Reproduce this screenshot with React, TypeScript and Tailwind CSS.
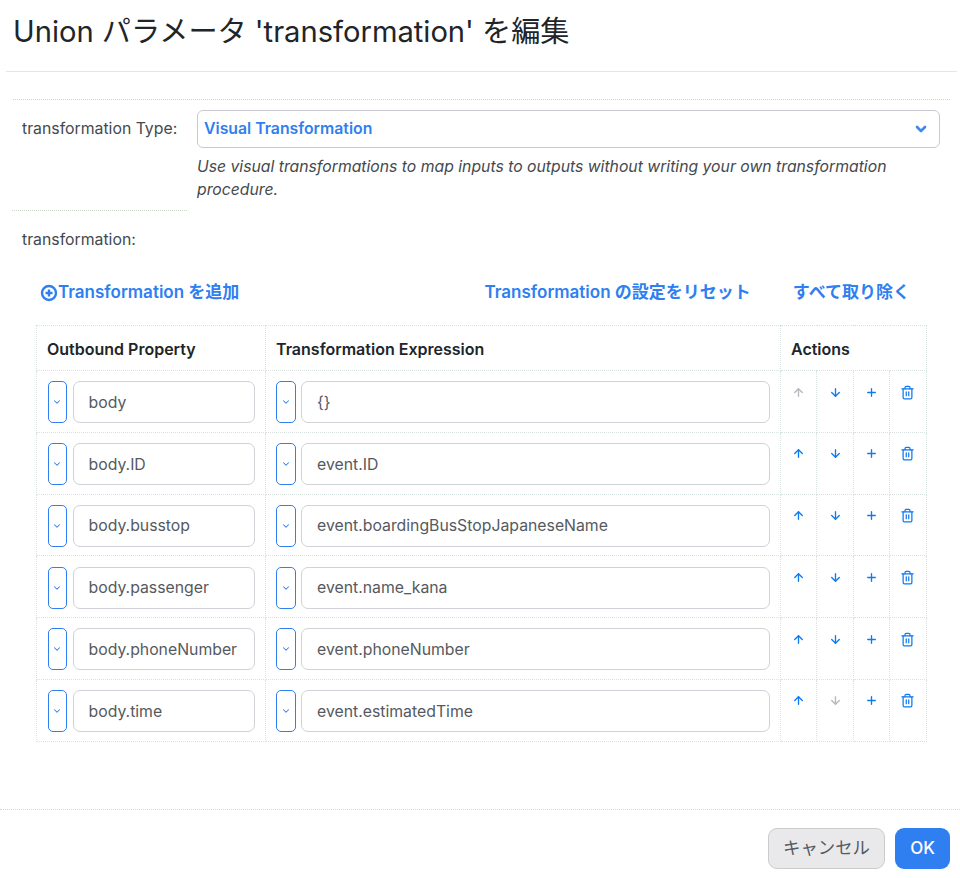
import React from "react";
import { ChevronDown, ArrowUp, ArrowDown, Plus, Trash2 } from "lucide-react";

const rows = [
  { k: "body", v: "{}", up: false, down: true },
  { k: "body.ID", v: "event.ID", up: true, down: true },
  { k: "body.busstop", v: "event.boardingBusStopJapaneseName", up: true, down: true },
  { k: "body.passenger", v: "event.name_kana", up: true, down: true },
  { k: "body.phoneNumber", v: "event.phoneNumber", up: true, down: true },
  { k: "body.time", v: "event.estimatedTime", up: true, down: false },
];

function Field({ value }: { value: string }) {
  return (
    <div className="flex gap-[5.5px]">
      <div className="flex h-[42px] w-[19.5px] shrink-0 items-center justify-center rounded-[5px] border-[1.5px] border-[#2f7ff0] bg-white">
        <ChevronDown size={10} strokeWidth={2.5} className="text-[#2f7ff0]" />
      </div>
      <div className="flex h-[42px] min-w-0 flex-1 items-center whitespace-nowrap rounded-[7px] border border-[#cfd2d6] bg-white pl-[15px] pt-[1px] text-[15.8px] text-[#555a60]">
        {value}
      </div>
    </div>
  );
}

function Act({ children }: { children: React.ReactNode }) {
  return <td className="border border-dotted border-[#d8e2de] p-0 align-top"><div className="mt-[14px] flex h-[14px] items-center justify-center">{children}</div></td>;
}

export default function App() {
  return (
    <div className="h-[878px] w-[960px] overflow-hidden bg-white text-[#212529] [font-family:Inter,'Noto_Sans_CJK_JP',sans-serif]">
      <div className="ml-[6px] mr-[3px] flex h-[72px] items-start border-b border-[#e2e8e2] pl-[7px] pt-[12px] text-[29.15px] leading-[39px] font-normal">
        Union パラメータ 'transformation' を編集
      </div>

      <div className="ml-[13px] mr-[10px] mt-[27px] border-t border-dotted border-[#cfd4d0] pl-[9px] pr-[10px] pt-[10px]">
        <div className="flex">
          <div className="w-[175px] shrink-0 pt-[9px] text-[15.8px] leading-[20px] text-[#44494e]">transformation Type:</div>
          <div className="flex-1">
            <div className="flex h-[38px] items-center justify-between rounded-[6px] border border-[#c9c9d2] pb-[1px] pl-[6px] pr-[10px] text-[15.8px] font-semibold text-[#2f7ff0]">
              Visual Transformation
              <ChevronDown size={16} strokeWidth={4} className="text-[#3f88ee]" />
            </div>
            <div className="mt-[7px] text-[15.75px] leading-[23px] italic text-[#44494e]">
              Use visual transformations to map inputs to outputs without writing your own transformation procedure.
            </div>
          </div>
        </div>
      </div>

      <div className="ml-[12px] mt-[9px] w-[175px] border-t border-dotted border-[#cbd8c8]" />

      <div className="ml-[22px] mt-[19px] text-[15.8px] leading-[20px] text-[#44494e]">transformation:</div>

      <div className="ml-[40px] mr-[50px] mt-[31px] flex h-[24px] items-center text-[17px] font-semibold text-[#2f7ff0]">
        <svg width="18" height="18" viewBox="0 0 18 18" className="shrink-0" fill="none" stroke="#2f7ff0">
          <circle cx="9" cy="9" r="7" strokeWidth="2.4" />
          <path d="M9 5.5v7M5.5 9h7" strokeWidth="2.4" />
        </svg>
        <span>Transformation を追加</span>
        <span className="ml-auto">Transformation の設定をリセット</span>
        <span className="ml-[42px]">すべて取り除く</span>
      </div>

      <table className="ml-[36px] mt-[20px] w-[890px] table-fixed border-collapse">
        <colgroup>
          <col className="w-[229px]" />
          <col className="w-[515px]" />
          <col className="w-[36px]" />
          <col className="w-[37px]" />
          <col className="w-[36px]" />
          <col className="w-[37px]" />
        </colgroup>
        <thead>
          <tr className="h-[45px] text-left text-[16px] font-semibold text-[#212529]">
            <th className="border border-dotted border-[#d8e2de] pl-[10px] pt-[1px] font-semibold">Outbound Property</th>
            <th className="border border-dotted border-[#d8e2de] pl-[10px] pt-[1px] font-semibold">Transformation Expression</th>
            <th colSpan={4} className="border border-dotted border-[#d8e2de] pl-[10px] pt-[1px] font-semibold">Actions</th>
          </tr>
        </thead>
        <tbody>
          {rows.map((r) => (
            <tr key={r.k} className="h-[61.8px]">
              <td className="border border-dotted border-[#d8e2de] pl-[10.5px] pr-[10px] pt-[1.5px] align-middle"><Field value={r.k} /></td>
              <td className="border border-dotted border-[#d8e2de] pl-[10px] pr-[10px] pt-[1.5px] align-middle"><Field value={r.v} /></td>
              <Act><ArrowUp size={13} strokeWidth={2.5} className={r.up ? "text-[#0d7bf2]" : "text-[#b5b9bd]"} /></Act>
              <Act><ArrowDown size={13} strokeWidth={2.5} className={r.down ? "text-[#0d7bf2]" : "text-[#b5b9bd]"} /></Act>
              <Act><Plus size={13} strokeWidth={2.5} className="text-[#0d7bf2]" /></Act>
              <Act><Trash2 size={15} strokeWidth={2} className="-translate-x-[1px] text-[#0d7bf2]" /></Act>
            </tr>
          ))}
        </tbody>
      </table>

      <div className="mt-[67px] flex h-[69px] items-start justify-end gap-[10px] border-t border-dotted border-[#d5d9d2] pr-[10px] pt-[18px]">
        <div className="flex h-[41px] w-[117px] items-center justify-center rounded-[9px] border border-[#cccccc] bg-[#e9e9ec] text-[17.4px] text-[#555a60]">キャンセル</div>
        <div className="flex h-[41px] w-[55px] items-center justify-center rounded-[9px] bg-[#2f7ff0] text-[17px] font-medium text-white">OK</div>
      </div>
    </div>
  );
}
